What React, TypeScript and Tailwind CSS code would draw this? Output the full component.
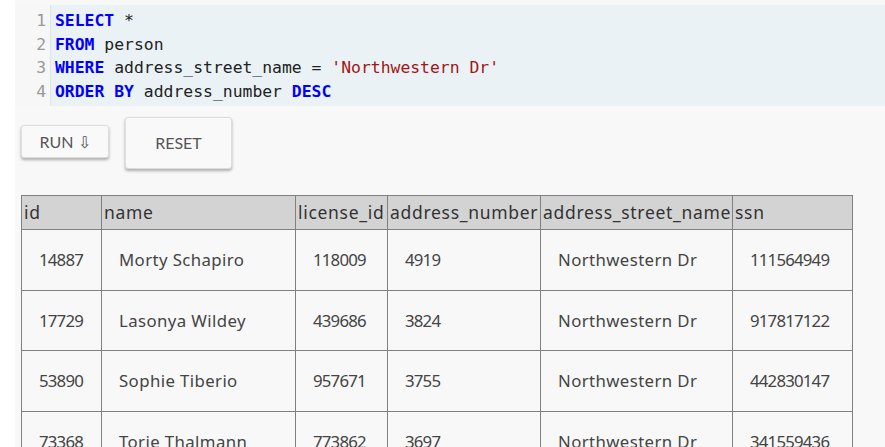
import React from 'react';

const mono = { fontFamily: '"DejaVu Sans Mono", monospace' };

const rows = [
    ['14887', 'Morty Schapiro', '118009', '4919', 'Northwestern Dr', '111564949'],
    ['17729', 'Lasonya Wildey', '439686', '3824', 'Northwestern Dr', '917817122'],
    ['53890', 'Sophie Tiberio', '957671', '3755', 'Northwestern Dr', '442830147'],
    ['73368', 'Torie Thalmann', '773862', '3697', 'Northwestern Dr', '341559436'],
];

const headers = ['id', 'name', 'license_id', 'address_number', 'address_street_name', 'ssn'];
const widths = ['w-[80px]', 'w-[194px]', 'w-[92px]', 'w-[153px]', 'w-[192px]', 'w-[120px]'];

function Kw({ children }: { children: React.ReactNode }) {
    return <span className="font-bold text-[#0000ff]">{children}</span>;
}

export default function App() {
    return (
        <div className="w-[885px] h-[447px] overflow-hidden bg-white pl-[15px]">
            <div className="h-full bg-[#f8f8f8] pt-[5px] font-['Lato',sans-serif]">
                {/* SQL editor */}
                <div className="flex h-[101px] text-[16.4px] leading-[23.5px]" style={mono}>
                    <div className="w-[36px] pt-[4px] pr-[4px] text-right text-[#999] bg-[#f7f7f7] border-r border-[#dde5e8]">
                        <div>1</div>
                        <div>2</div>
                        <div>3</div>
                        <div>4</div>
                    </div>
                    <div className="flex-1 bg-[#eaf2f5] pt-[4px] pl-[4px] text-[#222] whitespace-pre">
                        <div><Kw>SELECT</Kw> *</div>
                        <div><Kw>FROM</Kw> person</div>
                        <div><Kw>WHERE</Kw> address_street_name = <span className="text-[#a31515]">'Northwestern Dr'</span></div>
                        <div><Kw>ORDER</Kw> <Kw>BY</Kw> address_number <Kw>DESC</Kw></div>
                    </div>
                </div>

                {/* buttons */}
                <div className="flex items-start gap-[16px] pl-[6px] pt-[11px]">
                    <button className="mt-[8px] w-[88px] h-[33px] rounded-[3px] bg-[#f9f9f9] border border-[#ddd] shadow-[0_2px_3px_rgba(0,0,0,0.3)] text-[16px] text-[#555]">
                        RUN ⇩
                    </button>
                    <button className="w-[107px] h-[52px] rounded-[3px] bg-[#f9f9f9] border border-[#ddd] shadow-[0_2px_3px_rgba(0,0,0,0.3)] text-[16px] text-[#555]">
                        RESET
                    </button>
                </div>

                {/* result table */}
                <div className="pl-[6px] pt-[26px]">
                    <table className="w-[832px] table-fixed border-collapse text-[#444] font-['Noto_Sans',sans-serif]">
                        <colgroup>
                            {widths.map((w, i) => <col key={i} className={w} />)}
                        </colgroup>
                        <thead>
                            <tr className="h-[34px] bg-[#d3d3d3]">
                                {headers.map((h) => (
                                    <th key={h} className="border border-[#808080] px-[2px] text-left font-normal text-[17.5px] text-[#333] tracking-[0.7px] whitespace-nowrap">
                                        {h}
                                    </th>
                                ))}
                            </tr>
                        </thead>
                        <tbody>
                            {rows.map((r) => (
                                <tr key={r[0]} className="h-[60.5px]">
                                    {r.map((c, i) => (
                                        <td
                                            key={i}
                                            className={
                                                i === 1 || i === 4
                                                    ? 'border border-[#808080] px-[17px] text-[16.8px] text-[#444] tracking-[0.4px] whitespace-nowrap'
                                                    : 'border border-[#808080] px-[17px] text-[16.8px] text-[#444] tracking-[-0.8px] whitespace-nowrap'
                                            }
                                        >
                                            {c}
                                        </td>
                                    ))}
                                </tr>
                            ))}
                        </tbody>
                    </table>
                </div>
            </div>
        </div>
    );
}
